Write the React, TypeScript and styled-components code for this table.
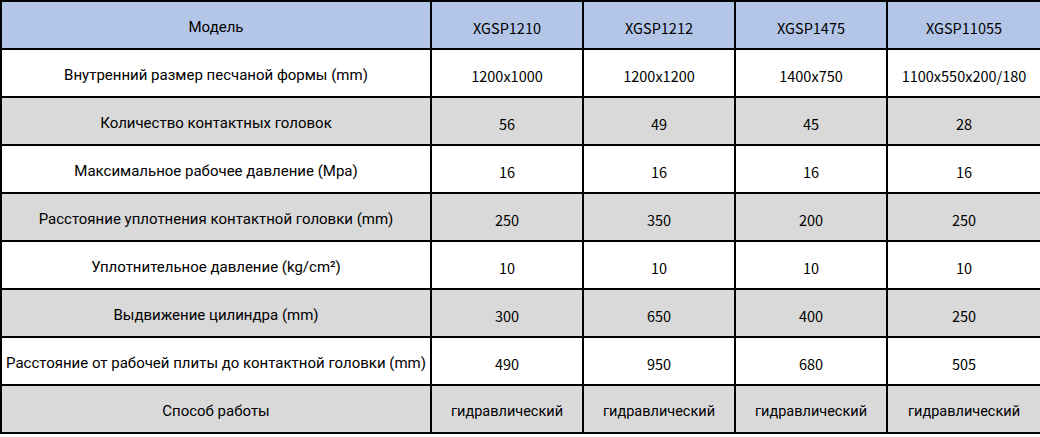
import { FC } from 'react';
import styled, { createGlobalStyle } from 'styled-components';

const GlobalStyle = createGlobalStyle`
  html, body {
    margin: 0;
    padding: 0;
    background: #fff;
  }
  body {
    font-family: Roboto, "Liberation Sans", "Noto Sans CJK SC", sans-serif;
    color: #000;
  }
`;

const Styled = {
  Table: styled.table`
    border-collapse: collapse;
    width: 1040px;
    table-layout: fixed;
  `,
  Col: styled.col<{ w: number }>`
    width: ${({ w }) => w}px;
  `,
  Row: styled.tr<{ tone: 'head' | 'white' | 'gray' }>`
    height: 48px;
    background: ${({ tone }) => (tone === 'head' ? '#b4c6e7' : tone === 'gray' ? '#d9d9d9' : '#fff')};
  `,
  Cell: styled.td<{ mono?: boolean }>`
    border: 2px solid #000;
    text-align: center;
    vertical-align: middle;
    padding: 4px 0 0;
    white-space: nowrap;
    font-size: 14.5px;
    font-family: ${({ mono }) =>
      mono ? '"Noto Sans CJK SC", Roboto, sans-serif' : 'Roboto, "Liberation Sans", sans-serif'};

    &:first-child {
      font-size: 15px;
    }
  `,
};

interface Spec {
  label: string;
  values: string[];
}

const widths = [430, 152, 152, 152, 154];

const header = ['XGSP1210', 'XGSP1212', 'XGSP1475', 'XGSP11055'];

const specs: Spec[] = [
  { label: 'Внутренний размер песчаной формы (mm)', values: ['1200x1000', '1200x1200', '1400x750', '1100x550x200/180'] },
  { label: 'Количество контактных головок', values: ['56', '49', '45', '28'] },
  { label: 'Максимальное рабочее давление (Mpa)', values: ['16', '16', '16', '16'] },
  { label: 'Расстояние уплотнения контактной головки (mm)', values: ['250', '350', '200', '250'] },
  { label: 'Уплотнительное давление (kg/cm²)', values: ['10', '10', '10', '10'] },
  { label: 'Выдвижение цилиндра (mm)', values: ['300', '650', '400', '250'] },
  { label: 'Расстояние от рабочей плиты до контактной головки (mm)', values: ['490', '950', '680', '505'] },
  { label: 'Способ работы', values: ['гидравлический', 'гидравлический', 'гидравлический', 'гидравлический'] },
];

const App: FC = () => (
  <>
    <GlobalStyle />
    <Styled.Table>
      <colgroup>
        {widths.map((w, i) => (
          <Styled.Col w={w} key={i} />
        ))}
      </colgroup>
      <tbody>
        <Styled.Row tone="head">
          <Styled.Cell>Модель</Styled.Cell>
          {header.map((h) => (
            <Styled.Cell mono key={h}>
              {h}
            </Styled.Cell>
          ))}
        </Styled.Row>
        {specs.map((s, i) => (
          <Styled.Row tone={i % 2 === 0 ? 'white' : 'gray'} key={s.label}>
            <Styled.Cell>{s.label}</Styled.Cell>
            {s.values.map((v, j) => (
              <Styled.Cell mono={!/[а-я]/.test(v)} key={j}>
                {v}
              </Styled.Cell>
            ))}
          </Styled.Row>
        ))}
      </tbody>
    </Styled.Table>
  </>
);

export default App;
